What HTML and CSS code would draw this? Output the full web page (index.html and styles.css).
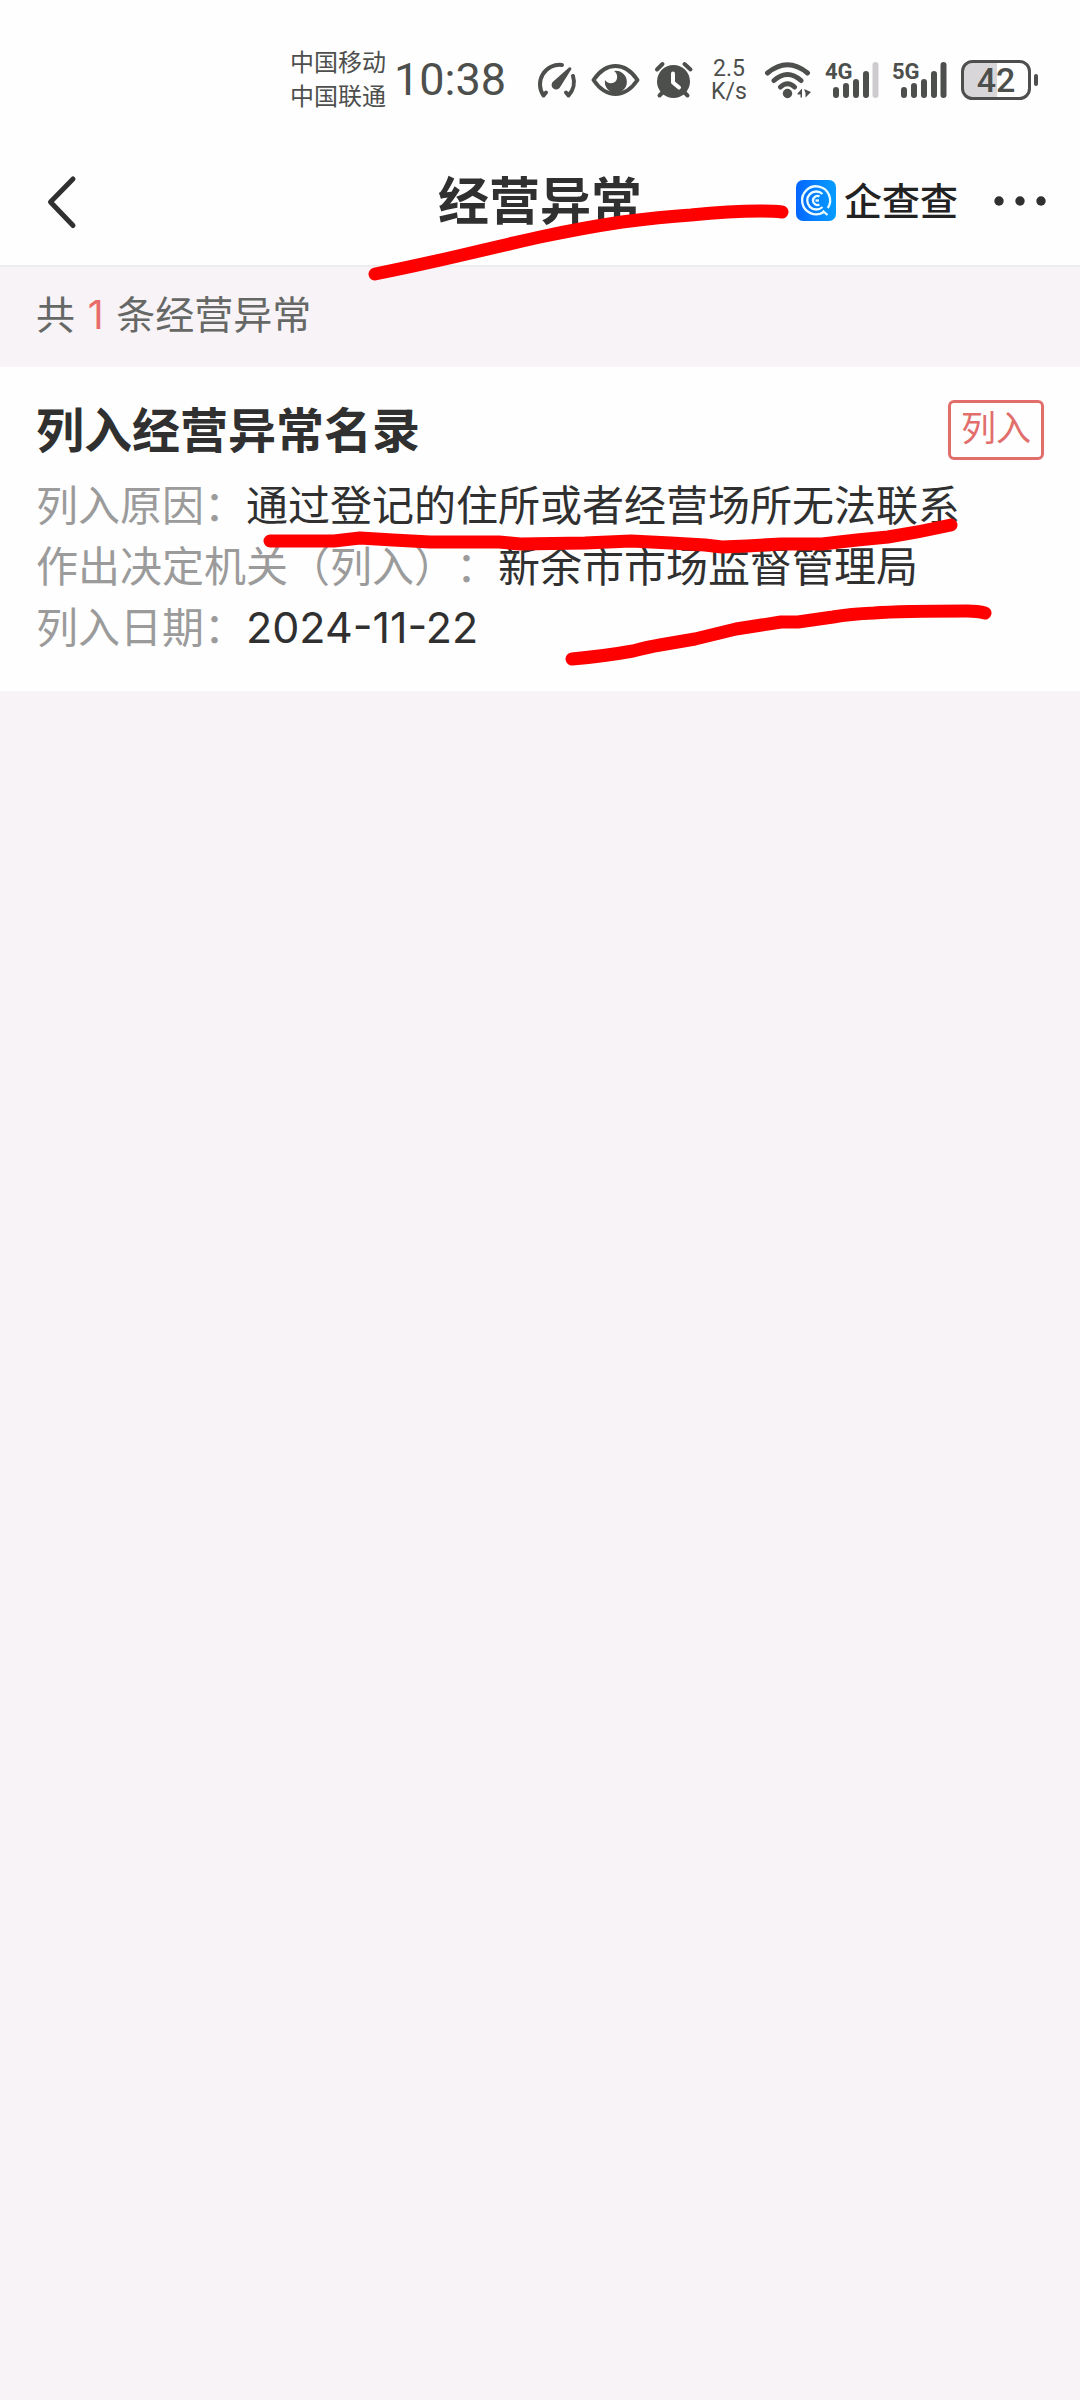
FILE: index.html
```html
<!DOCTYPE html>
<html lang="zh-CN">
<head>
<meta charset="utf-8">
<meta name="viewport" content="width=device-width, initial-scale=1">
<title>经营异常</title>
<link rel="stylesheet" href="styles.css">
</head>
<body>
<div class="status-bar">
  <div class="status-main">
    <div class="carriers"><span>中国移动</span><span>中国联通</span></div>
    <time class="clock">10:38</time>
  </div>
  <svg class="icon" width="44" height="40" viewBox="534 60 44 40" aria-hidden="true">
    <g class="line"><path d="M546 92.500L543.500 95.500A19.500 19.500 0 0 1 562 65"/><path d="M573 76A19.500 19.500 0 0 1 568.500 95.500L566 92.500"/></g>
    <path class="fill" d="M569 67.500Q571 66.500 571.500 69L560.500 86.500A4.600 4.600 0 1 1 553.500 81.200Z"/>
  </svg>
  <svg class="icon" width="52" height="40" viewBox="590 60 52 40" aria-hidden="true">
    <path class="line" d="M593.500 80Q603 66 615.500 66T637.500 80Q628 94 615.500 94T593.500 80Z"/>
    <path class="fill" d="M614 71A11 11 0 1 1 605 80C607 84 614 84.500 616.500 80C618 76.500 617 73 614 71Z"/>
  </svg>
  <svg class="icon" width="44" height="40" viewBox="654 60 44 40" aria-hidden="true">
    <circle class="fill" cx="673.500" cy="81.500" r="16.500"/>
    <path class="line" d="M657 69.500L662.500 64M684.500 64L690.500 69.500M659.500 95.500L664 91M687.500 95.500L683 91"/>
    <path class="hands" d="M673 73.500V82.500L679 87.500"/>
  </svg>
  <div class="speed"><span>2.5</span><span>K/s</span></div>
  <svg class="icon" width="52" height="40" viewBox="760 60 52 40" aria-hidden="true">
    <path class="line thick" d="M767.500 73Q787.500 56.500 807.500 73M774 80.500Q787.500 68.500 801 80.500M780.500 87Q787.500 80.500 794.500 87"/>
    <circle class="fill" cx="787.500" cy="93.500" r="4.700"/>
    <path class="fill" d="M797.500 93.500L802 88.500V97.500H800.500V94.500H797.500ZM804 89L811 92L805.500 97.500V93Z"/>
  </svg>
  <svg class="icon" width="56" height="40" viewBox="824 60 56 40" role="img" aria-label="4G">
    <text class="net" x="825" y="79">4G</text>
    <path class="bars" d="M836 90V95M846 86V95M856 82V95M866 74V95"/><path class="bars weak" d="M875.500 65V95"/>
  </svg>
  <svg class="icon" width="57" height="40" viewBox="892 60 57 40" role="img" aria-label="5G">
    <text class="net" x="892" y="79">5G</text>
    <path class="bars" d="M904 90V95M914 86V95M924 82V95M934 74V95M943.500 65V95"/>
  </svg>
  <svg class="icon" width="78" height="40" viewBox="961 60 78 40" role="img" aria-label="42%">
    <path class="charge" d="M997 62V98H973Q963 98 963 88V72Q963 62 973 62Z"/>
    <rect class="shell" x="962.500" y="61.500" width="67" height="37" rx="10"/>
    <path class="tip" d="M1036 76V84"/>
    <text class="level" x="996" y="92">42</text>
  </svg>
</div>

<header class="nav">
  <button class="back" type="button" aria-label="返回">
    <svg width="32" height="56" viewBox="46 176 32 56" aria-hidden="true"><path d="M73 181L50.500 204L73 227.500"/></svg>
  </button>
  <h1>经营异常</h1>
  <div class="nav-right">
    <a class="brand" href="#">
      <svg width="40" height="41" viewBox="0 0 40 41" aria-hidden="true">
        <defs><linearGradient id="brand-blue"><stop offset="0" stop-color="#0566ff"/><stop offset="1" stop-color="#069dff"/></linearGradient></defs>
        <rect width="40" height="41" rx="7" fill="url(#brand-blue)"/>
        <g fill="none" stroke="#e9fbff" stroke-width="2.300">
          <path d="M27.500 32.200A14 14 0 1 1 31.800 28"/>
          <path d="M27 32.500L27.500 31.500L31.500 35"/>
          <path d="M26.500 14A9 9 0 1 0 26.500 27"/>
          <path d="M23.500 16.500A4.500 4.500 0 1 0 23.500 24.500"/>
          <path d="M19.500 20.500H23"/>
        </g>
      </svg>
      <span>企查查</span>
    </a>
    <button class="more" type="button" aria-label="更多">
      <svg width="54" height="12" viewBox="0 0 54 12" aria-hidden="true"><circle cx="6" cy="6" r="4.700"/><circle cx="27" cy="6" r="4.700"/><circle cx="48" cy="6" r="4.700"/></svg>
    </button>
  </div>
</header>

<main>
  <p class="summary">共 <span class="count">1</span> 条经营异常</p>
  <article class="card">
    <div class="card-head"><h2>列入经营异常名录</h2><span class="tag">列入</span></div>
    <dl>
      <div><dt>列入原因：</dt><dd>通过登记的住所或者经营场所无法联系</dd></div>
      <div><dt>作出决定机关（列入）：</dt><dd>新余市市场监督管理局</dd></div>
      <div><dt>列入日期：</dt><dd><time>2024-11-22</time></dd></div>
    </dl>
  </article>
</main>

<svg class="marks" viewBox="0 0 1080 702" aria-hidden="true">
  <path d="M375 274Q415 266 458 256Q500 246 540 237Q582 228 622 222Q660 217 691 215Q730 211 760 211Q774 211 782 212"/>
  <path d="M270 541H334L360 538L393 540L430 542H499L520 544L585 543L631 541L671 543L705 545L722 547L747 546L781 544H822L857 540L888 537Q920 532 951 525"/>
  <path d="M572 659Q605 656 633 651Q648 647 660 645L695 639L736 629L781 622L798 622L833 617Q850 614 874 613Q900 611 967 611Q978 611 985 613"/>
</svg>
</body>
</html>
```
FILE: styles.css
```css
* {
  box-sizing: border-box;
}

body {
  position: relative;
  margin: 0;
  min-height: 100vh;
  background: #f7f3f7;
  color: #303030;
  font-family: "Noto Sans CJK SC", sans-serif;
  text-spacing-trim: space-all;
}

h1, h2, p, dl, dd {
  margin: 0;
}

button {
  display: flex;
  padding: 0;
  border: 0;
  background: none;
}

svg {
  display: block;
  flex: none;
}

.status-bar {
  display: flex;
  align-items: center;
  justify-content: flex-end;
  gap: 12px;
  height: 136px;
  padding: 24px 41px 0 0;
  background: #fefefe;
  color: #4d4f4d;
}

.status-main {
  display: flex;
  align-items: center;
  gap: 8px;
  margin-right: 16px;
}

.carriers {
  display: flex;
  flex-direction: column;
  padding-bottom: 4px;
  font-size: 24px;
  line-height: 34px;
}

.clock {
  font: 45px/48px Roboto, sans-serif;
}

.speed {
  display: flex;
  flex-direction: column;
  width: 38px;
  text-align: center;
  font: 23px/23px Roboto, sans-serif;
}

.fill {
  fill: #4d4f4d;
}

.line, .bars, .tip, .hands, .shell {
  fill: none;
  stroke: #4d4f4d;
  stroke-width: 4;
  stroke-linecap: round;
  stroke-linejoin: round;
}

.thick {
  stroke-width: 5;
}

.bars {
  stroke-width: 6;
}

.weak {
  stroke: #cdcbce;
}

.hands {
  stroke: #fefefe;
}

.shell {
  stroke-width: 3;
}

.charge {
  fill: #d9d6da;
}

.net, .level {
  fill: #4d4f4d;
  font: 700 22px Roboto, sans-serif;
}

.level {
  font-size: 34px;
  font-weight: 500;
  text-anchor: middle;
}

.nav {
  display: grid;
  grid-template-columns: 1fr auto 1fr;
  align-items: center;
  height: 131px;
  padding: 0 33px;
  border-bottom: 2px solid #ededee;
  background: #fefefe;
}

.back {
  padding: 2px 0 0 13px;
}

.back path {
  fill: none;
  stroke: #303030;
  stroke-width: 5;
  stroke-linecap: round;
  stroke-linejoin: round;
}

.nav h1 {
  padding-bottom: 6px;
  font-size: 51px;
  line-height: 72px;
}

.nav-right {
  display: flex;
  align-items: center;
  justify-content: flex-end;
  gap: 35px;
}

.brand {
  display: flex;
  align-items: center;
  gap: 8px;
  color: #222;
  font-size: 38px;
  font-weight: 500;
  line-height: 40px;
  text-decoration: none;
}

.brand span {
  padding-bottom: 4px;
}

.more {
  fill: #303030;
}

.summary {
  padding: 16px 36px 26px;
  color: #666866;
  font-size: 39px;
  line-height: 58px;
}

.count {
  padding: 0 4px;
  color: #e96c6a;
  font-family: Inter, sans-serif;
  line-height: 1;
}

.card {
  padding: 23px 36px 36px;
  background: #fefefe;
}

.card-head {
  display: flex;
  align-items: center;
  justify-content: space-between;
  height: 80px;
  margin-bottom: 2px;
}

.card h2 {
  padding-bottom: 6px;
  font-size: 48px;
  line-height: 72px;
}

.tag {
  padding: 0 10px 8px;
  border: 3px solid #e26e6c;
  border-radius: 6px;
  color: #e26e6c;
  font-size: 35px;
  line-height: 46px;
}

dl {
  font-size: 42px;
  line-height: 61px;
}

dl div {
  display: flex;
}

dt {
  flex: none;
  color: #9b9b9b;
}

dd time {
  font-family: Inter, sans-serif;
  font-size: 43px;
  line-height: 1;
}

.marks {
  position: absolute;
  top: 0;
  left: 0;
  width: 100%;
  pointer-events: none;
  fill: none;
  stroke: #f00;
  stroke-width: 13;
  stroke-linecap: round;
  stroke-linejoin: round;
}
```
